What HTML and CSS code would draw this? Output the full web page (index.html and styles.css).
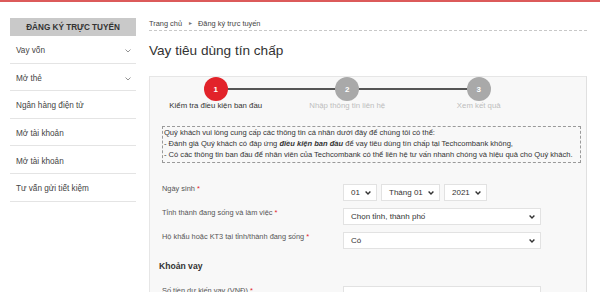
FILE: index.html
```html
<!DOCTYPE html>
<html lang="vi">
<head>
<meta charset="utf-8">
<title>Vay tiêu dùng tín chấp</title>
<link rel="stylesheet" href="styles.css">
</head>
<body>
<div class="topbar"></div>
<div class="page">
  <aside class="sidebar">
    <div class="side-head">ĐĂNG KÝ TRỰC TUYẾN</div>
    <ul class="side-menu">
      <li class="side-item"><span>Vay vốn</span><svg class="chev" width="6" height="4" viewBox="0 0 6 4"><polyline points="0.5,0.5 3,3 5.5,0.5" fill="none" stroke="#888" stroke-width="0.9"/></svg></li>
      <li class="side-item"><span>Mở thẻ</span><svg class="chev" width="6" height="4" viewBox="0 0 6 4"><polyline points="0.5,0.5 3,3 5.5,0.5" fill="none" stroke="#888" stroke-width="0.9"/></svg></li>
      <li class="side-item"><span>Ngân hàng điện tử</span></li>
      <li class="side-item"><span>Mở tài khoản</span></li>
      <li class="side-item"><span>Mở tài khoản</span></li>
      <li class="side-item"><span>Tư vấn gửi tiết kiệm</span></li>
    </ul>
  </aside>
  <main class="main">
    <nav class="crumbs"><span>Trang chủ</span><span class="crumb-sep">&#9656;</span><span>Đăng ký trực tuyến</span></nav>
    <h1 class="title">Vay tiêu dùng tín chấp</h1>
    <section class="card">
      <div class="steps">
        <div class="step active"><div class="dot">1</div><div class="step-label">Kiểm tra điều kiện ban đầu</div></div>
        <div class="step"><div class="dot">2</div><div class="step-label">Nhập thông tin liên hệ</div></div>
        <div class="step"><div class="dot">3</div><div class="step-label">Xem kết quả</div></div>
      </div>
      <div class="notice">
        <p>Quý khách vui lòng cung cấp các thông tin cá nhân dưới đây để chúng tôi có thể:</p>
        <p>- Đánh giá Quý khách có đáp ứng <b><i>điều kiện ban đầu</i></b> để vay tiêu dùng tín chấp tại Techcombank không,</p>
        <p>- Có các thông tin ban đầu để nhân viên của Techcombank có thể liên hệ tư vấn nhanh chóng và hiệu quả cho Quý khách.</p>
      </div>
      <div class="form">
        <div class="row">
          <label class="lbl">Ngày sinh <span class="req">*</span></label>
          <div class="ctrls">
            <div class="sel w-day"><span>01</span><svg width="6" height="4" viewBox="0 0 6 4"><polyline points="0.6,0.6 3,3 5.4,0.6" fill="none" stroke="#333" stroke-width="1.4"/></svg></div>
            <div class="sel w-month"><span>Tháng 01</span><svg width="6" height="4" viewBox="0 0 6 4"><polyline points="0.6,0.6 3,3 5.4,0.6" fill="none" stroke="#333" stroke-width="1.4"/></svg></div>
            <div class="sel w-year"><span>2021</span><svg width="6" height="4" viewBox="0 0 6 4"><polyline points="0.6,0.6 3,3 5.4,0.6" fill="none" stroke="#333" stroke-width="1.4"/></svg></div>
          </div>
        </div>
        <div class="row">
          <label class="lbl">Tỉnh thành đang sống và làm việc <span class="req">*</span></label>
          <div class="ctrls">
            <div class="sel w-full"><span>Chọn tỉnh, thành phố</span><svg width="6" height="4" viewBox="0 0 6 4"><polyline points="0.6,0.6 3,3 5.4,0.6" fill="none" stroke="#333" stroke-width="1.4"/></svg></div>
          </div>
        </div>
        <div class="row">
          <label class="lbl">Hộ khẩu hoặc KT3 tại tỉnh/thành đang sống <span class="req">*</span></label>
          <div class="ctrls">
            <div class="sel w-full"><span>Có</span><svg width="6" height="4" viewBox="0 0 6 4"><polyline points="0.6,0.6 3,3 5.4,0.6" fill="none" stroke="#333" stroke-width="1.4"/></svg></div>
          </div>
        </div>
        <h2 class="sub">Khoản vay</h2>
        <div class="row">
          <label class="lbl">Số tiền dự kiến vay (VNĐ) <span class="req">*</span></label>
          <div class="ctrls"><div class="sel w-full input"></div></div>
        </div>
      </div>
    </section>
  </main>
</div>
</body>
</html>
```

FILE: styles.css
```css
* { box-sizing: border-box; }
html, body { margin: 0; padding: 0; background: #fff; }
body {
  font-family: "Liberation Sans", Arial, sans-serif;
  color: #333;
  width: 600px;
  height: 292px;
  overflow: hidden;
}
.topbar { height: 2px; background: #dc5a5a; }
.page {
  display: flex;
  align-items: flex-start;
  height: 290px;
  overflow: hidden;
  padding: 16px 0 0 10px;
}
.sidebar { width: 126px; flex: none; }
.side-head {
  height: 18px;
  background: #c9c9c9;
  color: #333;
  font-size: 8.2px;
  font-weight: bold;
  display: flex;
  align-items: center;
  justify-content: center;
}
.side-menu { list-style: none; margin: 0; padding: 0; }
.side-item {
  height: 27.6px;
  border-bottom: 1px solid #e4e4e4;
  display: flex;
  align-items: center;
  justify-content: space-between;
  padding: 3px 5px 0 6px;
  font-size: 8.2px;
  color: #444;
}
.chev { margin-top: 1px; }
.main { margin-left: 13px; width: 438px; flex: none; }
.crumbs {
  display: flex;
  align-items: center;
  font-size: 7.4px;
  color: #444;
  line-height: 9px;
  padding: 1px 0 2px 0;
  border-bottom: 1px dashed #c8c8c8;
}
.crumb-sep { font-size: 6px; color: #777; margin: 0 6px 0 7px; }
.title {
  margin: 11px 0 0 0;
  font-size: 13.6px;
  line-height: 17px;
  font-weight: normal;
  color: #333;
}
.card {
  margin-top: 17px;
  background: #f8f8f8;
  border: 1px solid #e6e6e6;
  border-right-color: #e0e0e0;
  padding: 0 5px 20px 12px;
  height: 240px;
}
.steps {
  display: grid;
  grid-template-columns: repeat(3, 131.5px);
  margin-left: -12px;
}
.step {
  position: relative;
  display: flex;
  flex-direction: column;
  align-items: center;
}
.step + .step::before {
  content: "";
  position: absolute;
  top: 11px;
  left: -50%;
  width: 100%;
  height: 2px;
  background: #555;
}
.dot {
  position: relative;
  z-index: 1;
  width: 24px;
  height: 24px;
  border-radius: 50%;
  background: #a9a9a9;
  color: #fff;
  font-size: 8px;
  font-weight: bold;
  display: flex;
  align-items: center;
  justify-content: center;
}
.step.active .dot { background: #e2232a; }
.step-label {
  margin-top: 0;
  font-size: 7.8px;
  line-height: 10px;
  color: #bdbdbd;
  white-space: nowrap;
}
.step.active .step-label { color: #333; }
.notice {
  margin-top: 15px;
  border: 1px dashed #9a9a9a;
  padding: 1px 2px 2px 1px;
  font-size: 7.55px;
  line-height: 10.8px;
  color: #333;
}
.notice p { margin: 0; white-space: nowrap; }
.form { margin-top: 21px; }
.row {
  display: flex;
  align-items: flex-start;
  height: 17px;
  margin-bottom: 7px;
}
.row + .row { margin-top: 1px; }
.lbl {
  width: 181px;
  flex: none;
  font-size: 7.4px;
  line-height: 10px;
  color: #555;
}
.req { color: #e2232a; }
.ctrls { display: flex; gap: 4px; }
.sel {
  height: 17px;
  background: #fff;
  border: 1px solid #e2e2e2;
  display: flex;
  align-items: center;
  justify-content: space-between;
  padding: 0 5px 0 7px;
  font-size: 8px;
  color: #333;
}
.w-day { width: 34px; }
.w-month { width: 59px; }
.w-year { width: 43px; }
.w-full { width: 198px; }
.sub {
  margin: 11px 0 14px -3px;
  font-size: 8.6px;
  line-height: 12px;
  font-weight: bold;
  color: #333;
}
```
